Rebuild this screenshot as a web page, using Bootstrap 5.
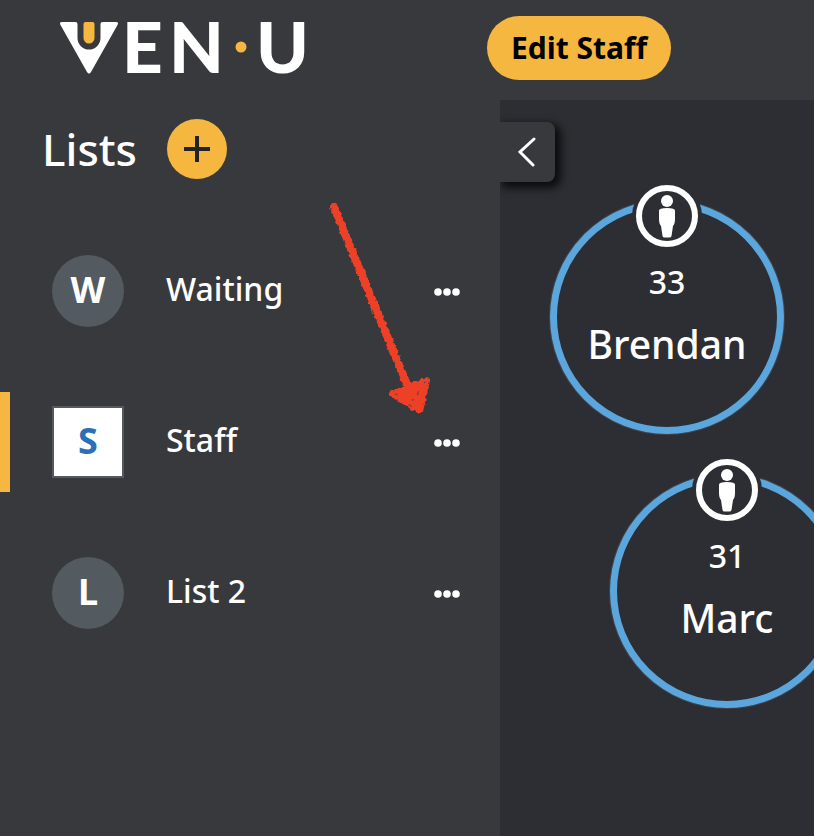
<!DOCTYPE html>
<html lang="en">
<head>
<meta charset="utf-8">
<meta name="viewport" content="width=device-width, initial-scale=1">
<title>VEN·U – Staff</title>
<link href="https://cdn.jsdelivr.net/npm/bootstrap@5.3.0/dist/css/bootstrap.min.css" rel="stylesheet">
<style>
  :root { --panel: #38393d; --canvas: #2d2e33; --amber: #f5b740; --slate: #535a60; --sky: #5ba6dd; }
  body { background: var(--panel); color: #fff; font-family: "Noto Sans", "Open Sans", sans-serif; font-weight: 500; }
  .top-bar { height: 100px; padding: 0 16px 4px 60px; gap: 174px; }
  .edit-btn { --bs-btn-color: #000; --bs-btn-bg: var(--amber); --bs-btn-hover-bg: #ffc65a; --bs-btn-border-width: 0;
    height: 64px; padding: 0 24px; font-size: 30px; font-weight: 700; line-height: 40px; white-space: nowrap; }
  .side { width: 500px; padding-top: 19px; }
  .side-head { padding-left: 42px; gap: 30px; margin-bottom: 62px; height: 60px; }
  .side-head h1 { font-size: 44px; line-height: 60px; font-weight: 500; }
  .add-btn { width: 60px; height: 60px; background: var(--amber); }
  .lists { gap: 51px; }
  .list-row { height: 100px; padding: 0 38px 0 42px; border-left: 10px solid transparent; }
  .list-row.current { border-left-color: var(--amber); }
  .list-link { gap: 42px; }
  .initial { width: 72px; height: 72px; background: var(--slate); border-radius: 50%; font-size: 36px; font-weight: 700; line-height: 70px; }
  .current .initial { background: #fff; border: 2px solid var(--slate); border-radius: 0; color: #2b6fb6; line-height: 66px; }
  .list-name { font-size: 32px; line-height: 44px; padding-bottom: 4px; }
  .board { background: var(--canvas); }
  .collapse-btn { width: 55px; height: 60px; margin-top: 22px; background: var(--panel); border-radius: 0 8px 8px 0; box-shadow: 4px 4px 8px 2px rgba(0,0,0,.75); }
  .person { width: 234px; height: 234px; border: 7px solid var(--sky); box-shadow: 0 0 0 1px #42444a; padding-top: 53px; }
  .person-a { left: 50px; top: 100px; }
  .person-b { left: 110px; top: 374px; }
  .person-icon { top: -26px; left: 50%; transform: translateX(-50%); }
  .seat { font-size: 32px; line-height: 44px; }
  .who { font-size: 39px; line-height: 56px; margin-top: 12px; }
  .pointer { left: 320px; top: 195px; pointer-events: none; }
</style>
<script src="https://cdn.jsdelivr.net/npm/bootstrap@5.3.0/dist/js/bootstrap.bundle.min.js"></script>
</head>
<body>
<div class="d-flex flex-column min-vh-100 position-relative overflow-hidden">
  <header class="top-bar d-flex align-items-center">
    <a href="#" class="flex-shrink-0 d-block" aria-label="VEN·U home">
      <svg class="d-block" width="253" height="92" viewBox="0 -20 253 92">
        <path fill="#fff" d="M2 0H15.500Q17.500 0 17.500 2V16A11.500 11.500 0 0 0 40.500 16V2Q40.500 0 42.500 0H56Q59 0 57.500 3L31 50Q29 53 27 50L.5 3Q-1 0 2 0Z"/>
        <path fill="#f5b740" d="M25.500 0H32.500Q34.500 0 34.500 2V16A5.500 5.500 0 0 1 23.500 16V2Q23.500 0 25.500 0Z"/>
        <g fill="#fff" font-family="Lato, sans-serif" font-weight="900" font-size="71">
          <text x="62" y="51">E</text><text x="109" y="51">N</text><text x="196" y="51">U</text>
        </g>
        <circle cx="181" cy="25" r="5.500" fill="#f5b740"/>
      </svg>
    </a>
    <button type="button" class="btn edit-btn rounded-pill">Edit Staff</button>
  </header>

  <div class="d-flex flex-grow-1">
    <aside class="side flex-shrink-0">
      <div class="side-head d-flex align-items-center">
        <h1 class="mb-0">Lists</h1>
        <button type="button" class="add-btn border-0 rounded-circle p-0 d-flex align-items-center justify-content-center" aria-label="Add list">
          <svg width="26" height="26" viewBox="0 0 26 26" stroke="#222326" stroke-width="4"><path d="M13 0V26M0 13H26"/></svg>
        </button>
      </div>
      <nav class="lists d-flex flex-column" aria-label="Lists">
        <div class="list-row d-flex align-items-center justify-content-between">
          <a href="#" class="list-link d-flex align-items-center text-white text-decoration-none"><span class="initial text-center">W</span><span class="list-name">Waiting</span></a>
          <button type="button" class="btn p-0 border-0 d-flex" aria-label="Waiting options"><svg width="30" height="30" fill="#fff"><circle cx="6" cy="16" r="3.800"/><circle cx="15" cy="16" r="3.800"/><circle cx="24" cy="16" r="3.800"/></svg></button>
        </div>
        <div class="list-row current d-flex align-items-center justify-content-between">
          <a href="#" class="list-link d-flex align-items-center text-white text-decoration-none" aria-current="page"><span class="initial text-center">S</span><span class="list-name">Staff</span></a>
          <button type="button" class="btn p-0 border-0 d-flex" aria-label="Staff options"><svg width="30" height="30" fill="#fff"><circle cx="6" cy="16" r="3.800"/><circle cx="15" cy="16" r="3.800"/><circle cx="24" cy="16" r="3.800"/></svg></button>
        </div>
        <div class="list-row d-flex align-items-center justify-content-between">
          <a href="#" class="list-link d-flex align-items-center text-white text-decoration-none"><span class="initial text-center">L</span><span class="list-name">List 2</span></a>
          <button type="button" class="btn p-0 border-0 d-flex" aria-label="List 2 options"><svg width="30" height="30" fill="#fff"><circle cx="6" cy="16" r="3.800"/><circle cx="15" cy="16" r="3.800"/><circle cx="24" cy="16" r="3.800"/></svg></button>
        </div>
      </nav>
    </aside>

    <main class="board flex-grow-1 position-relative overflow-hidden">
      <button type="button" class="collapse-btn border-0 p-0 d-flex align-items-center justify-content-center" aria-label="Collapse lists">
        <svg width="20" height="30" viewBox="0 0 20 30" fill="none" stroke="#fff" stroke-width="3" stroke-linecap="round"><path d="M16 2L2 15L15 28"/></svg>
      </button>
      <article class="person person-a position-absolute rounded-circle text-center">
        <svg class="person-icon position-absolute" width="70" height="70" viewBox="0 0 70 70"><circle cx="35" cy="35" r="35" fill="#2d2e33"/><circle cx="35" cy="35" r="28" fill="none" stroke="#fff" stroke-width="6"/><circle cx="35" cy="20" r="6" fill="#fff"/><path fill="#fff" d="M27 29.500Q27 27 35 27Q43 27 43 29.500V38Q43 43 41 45L39.500 55Q39 56.500 37.500 56.500H32.500Q31 56.500 30.500 55L29 45Q27 43 27 38Z"/></svg>
        <div class="seat">33</div>
        <div class="who">Brendan</div>
      </article>
      <article class="person person-b position-absolute rounded-circle text-center">
        <svg class="person-icon position-absolute" width="70" height="70" viewBox="0 0 70 70"><circle cx="35" cy="35" r="35" fill="#2d2e33"/><circle cx="35" cy="35" r="28" fill="none" stroke="#fff" stroke-width="6"/><circle cx="35" cy="20" r="6" fill="#fff"/><path fill="#fff" d="M27 29.500Q27 27 35 27Q43 27 43 29.500V38Q43 43 41 45L39.500 55Q39 56.500 37.500 56.500H32.500Q31 56.500 30.500 55L29 45Q27 43 27 38Z"/></svg>
        <div class="seat">31</div>
        <div class="who">Marc</div>
      </article>
    </main>
  </div>

  <!-- hand-drawn pointer over the list options -->
  <svg class="pointer position-absolute" width="130" height="230" viewBox="0 0 130 230" aria-hidden="true">
    <filter id="crayon" x="-10%" y="-10%" width="120%" height="120%"><feTurbulence type="fractalNoise" baseFrequency=".3" numOctaves="2" seed="4"/><feDisplacementMap in="SourceGraphic" scale="4" xChannelSelector="R" yChannelSelector="G"/></filter>
    <g filter="url(#crayon)" fill="#ee4026" stroke="#ee4026" stroke-linejoin="round" stroke-linecap="round">
      <path d="M14 12L88 192" stroke-width="8"/>
      <path d="M72 199L107 185L100 216Z" stroke-width="6"/>
      <path d="M76 199h1M104 187l1-1M92 205h1M89 210h1M97 198h1" stroke="#38393d" stroke-width="1"/>
    </g>
  </svg>
</div>
</body>
</html>
